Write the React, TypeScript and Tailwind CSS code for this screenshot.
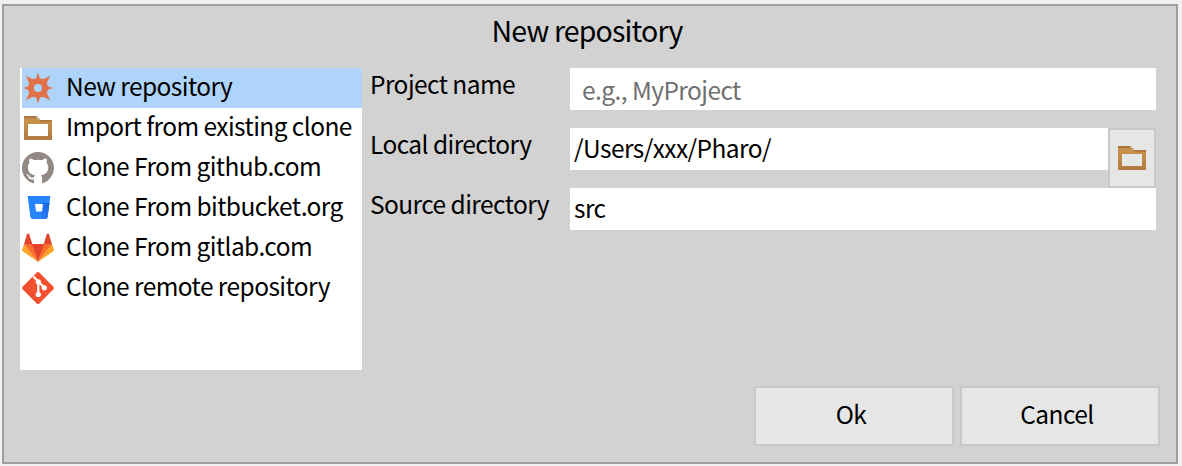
import React from 'react';

function StarIcon() {
  return (
    <svg viewBox="0 0 32 32" className="block h-8 w-8">
      <path
        fill="#e0724a"
        d="M16 0.5L18.6 8.4H13.4ZM16 31.5L13.4 23.6H18.6ZM1 16L8.4 13.4V18.6ZM31 16L23.6 18.6V13.4ZM3.8 3.8L13 8.2L8.2 13ZM28.2 3.8L23.8 13L19 8.2ZM3.8 28.2L8.2 19L13 23.8ZM28.2 28.2L19 23.8L23.8 19Z"
      />
      <circle cx="16" cy="16" r="7" fill="none" stroke="#e0724a" strokeWidth="6" />
    </svg>
  );
}

function FolderIcon() {
  return (
    <svg viewBox="0 0 32 32" className="block h-8 w-8" shapeRendering="crispEdges">
      <defs>
        <linearGradient id="folder" x1="0" y1="0" x2="0" y2="1">
          <stop offset="0" stopColor="#b9854f" />
          <stop offset="0.2" stopColor="#c8924a" />
          <stop offset="1" stopColor="#b07a40" />
        </linearGradient>
      </defs>
      <path fill="url(#folder)" fillRule="evenodd" d="M2 4H14V6H16V8H30V28H2ZM6 12V24H26V12Z" />
      <path fill="#a9703a" d="M2 4H14V6H2ZM18 8H30V10H18Z" opacity="0.8" />
      <path fill="#c9b7a2" d="M14 4H16V6H14ZM16 6H18V8H16Z" />
    </svg>
  );
}

function GithubIcon() {
  return (
    <svg viewBox="0 0 16 16" className="block h-8 w-8">
      <path
        fill="#938883"
        d="M8 0C3.58 0 0 3.58 0 8c0 3.54 2.29 6.53 5.47 7.59.4.07.55-.17.55-.38 0-.19-.01-.82-.01-1.49-2.01.37-2.53-.49-2.69-.94-.09-.23-.48-.94-.82-1.13-.28-.15-.68-.52-.01-.53.63-.01 1.08.58 1.23.82.72 1.21 1.87.87 2.33.66.07-.52.28-.87.51-1.07-1.78-.2-3.64-.89-3.64-3.95 0-.87.31-1.59.82-2.15-.08-.2-.36-1.02.08-2.12 0 0 .67-.21 2.2.82.64-.18 1.32-.27 2-.27s1.36.09 2 .27c1.53-1.04 2.2-.82 2.2-.82.44 1.1.16 1.92.08 2.12.51.56.82 1.27.82 2.15 0 3.07-1.87 3.75-3.65 3.95.29.25.54.73.54 1.48 0 1.07-.01 1.93-.01 2.2 0 .21.15.46.55.38A8.01 8.01 0 0 0 16 8c0-4.42-3.58-8-8-8z"
      />
    </svg>
  );
}

function BitbucketIcon() {
  return (
    <svg viewBox="0 0 32 32" className="block h-8 w-8">
      <defs>
        <linearGradient id="bucket" x1="1" y1="0.3" x2="0.4" y2="0.8">
          <stop offset="0" stopColor="#1c69de" />
          <stop offset="1" stopColor="#2b83ff" />
        </linearGradient>
      </defs>
      <path fill="#2684ff" d="M5.6 4H28.4L25.6 25Q25.4 27 23.6 27H10.4Q8.6 27 8.4 25Z" />
      <path fill="url(#bucket)" d="M27.5 11H20V20L10 27H23.6Q25.4 27 25.6 25Z" />
      <path fill="#fff" d="M13 12H21L20 19.6H14Z" />
    </svg>
  );
}

function GitlabIcon() {
  return (
    <svg viewBox="0 0 32 32" className="block h-8 w-8">
      <path fill="#fca326" d="M2 12.2L0.2 17.5Q-0.1 18.6 0.8 19.2L16 30Z" />
      <path fill="#fca326" d="M30 12.2L31.8 17.5Q32.1 18.6 31.2 19.2L16 30Z" />
      <path fill="#fc6d26" d="M16 30L10.2 12.2H2Z" />
      <path fill="#fc6d26" d="M16 30L21.8 12.2H30Z" />
      <path fill="#e24329" d="M16 30L9.8 12H22.2Z" />
      <path fill="#e24329" d="M2 12.4H10.4L7.2 2.2Q6.1 0.8 5 2.2Z" />
      <path fill="#e24329" d="M30 12.4H21.6L24.8 2.2Q25.9 0.8 27 2.2Z" />
    </svg>
  );
}

function GitIcon() {
  return (
    <svg viewBox="0 0 32 32" className="block h-8 w-8">
      <path fill="#f4502f" d="M14.7 0.6Q16 -0.5 17.3 0.6L31.4 14.7Q32.4 16 31.4 17.3L17.3 31.4Q16 32.4 14.7 31.4L0.6 17.3Q-0.4 16 0.6 14.7Z" />
      <path stroke="#fff" strokeWidth="2.2" fill="none" d="M11.2 4.2L16.3 9.6V22.5M16.3 9.6L22.3 15.8" />
      <circle cx="16.3" cy="9.8" r="2.6" fill="#fff" />
      <circle cx="22.3" cy="15.8" r="2.6" fill="#fff" />
      <circle cx="16.3" cy="22.5" r="2.6" fill="#fff" />
    </svg>
  );
}

const sources = [
  { label: 'New repository', icon: <StarIcon />, selected: true },
  { label: 'Import from existing clone', icon: <FolderIcon />, selected: false },
  { label: 'Clone From github.com', icon: <GithubIcon />, selected: false },
  { label: 'Clone From bitbucket.org', icon: <BitbucketIcon />, selected: false },
  { label: 'Clone From gitlab.com', icon: <GitlabIcon />, selected: false },
  { label: 'Clone remote repository', icon: <GitIcon />, selected: false },
];

export default function App() {
  return (
    <div className="h-[466px] w-[1182px] overflow-hidden bg-[#f0f0f0] pt-1 pl-0.5 font-['Noto_Sans_CJK_SC','Noto_Sans',sans-serif] text-[24.5px] tracking-[-0.57px] whitespace-nowrap text-black">
      <div className="flex h-[460px] w-[1176px] flex-col border-2 border-[#9e9e9e] bg-[#d2d2d2]">
        <h1 className="h-[62px] pr-1.5 text-center text-[28.5px] leading-[47px] font-normal tracking-[-0.85px]">New repository</h1>
        <div className="flex h-[302px] pl-4">
          <ul className="w-[342px] bg-white pl-0.5">
            {sources.map((s) => (
              <li key={s.label} className={s.selected ? 'flex h-10 bg-[#afd4fa]' : 'flex h-10'}>
                <span className="mr-3 pt-1">{s.icon}</span>
                <span className="leading-[35px]">{s.label}</span>
              </li>
            ))}
          </ul>
          <div className="flex flex-col gap-[18px] pl-2">
            <label className="flex h-[42px]">
              <span className="w-[200px] leading-[31px]">Project name</span>
              <span className="w-[586px] bg-white pl-3 leading-[43px] text-[#707070]">e.g., MyProject</span>
            </label>
            <div className="flex h-[42px]">
              <span className="w-[200px] leading-[31px]">Local directory</span>
              <span className="w-[538px] bg-white pl-1 leading-[39px]">/Users/xxx/Pharo/</span>
              <button className="flex h-[60px] w-12 items-center justify-center border-2 border-[#c8c8c8] bg-[#e6e6e6]">
                <FolderIcon />
              </button>
            </div>
            <label className="flex h-[42px]">
              <span className="w-[200px] leading-[31px]">Source directory</span>
              <span className="w-[586px] bg-white pl-1 leading-[39px]">src</span>
            </label>
          </div>
        </div>
        <div className="flex justify-end gap-1.5 pt-4 pr-4">
          <button className="flex h-[60px] w-[200px] items-start justify-center border-2 border-[#c8c8c8] bg-[#e6e6e6] pr-1.5 leading-[51px]">Ok</button>
          <button className="flex h-[60px] w-[200px] items-start justify-center border-2 border-[#c8c8c8] bg-[#e6e6e6] pr-1.5 leading-[51px]">Cancel</button>
        </div>
      </div>
    </div>
  );
}
